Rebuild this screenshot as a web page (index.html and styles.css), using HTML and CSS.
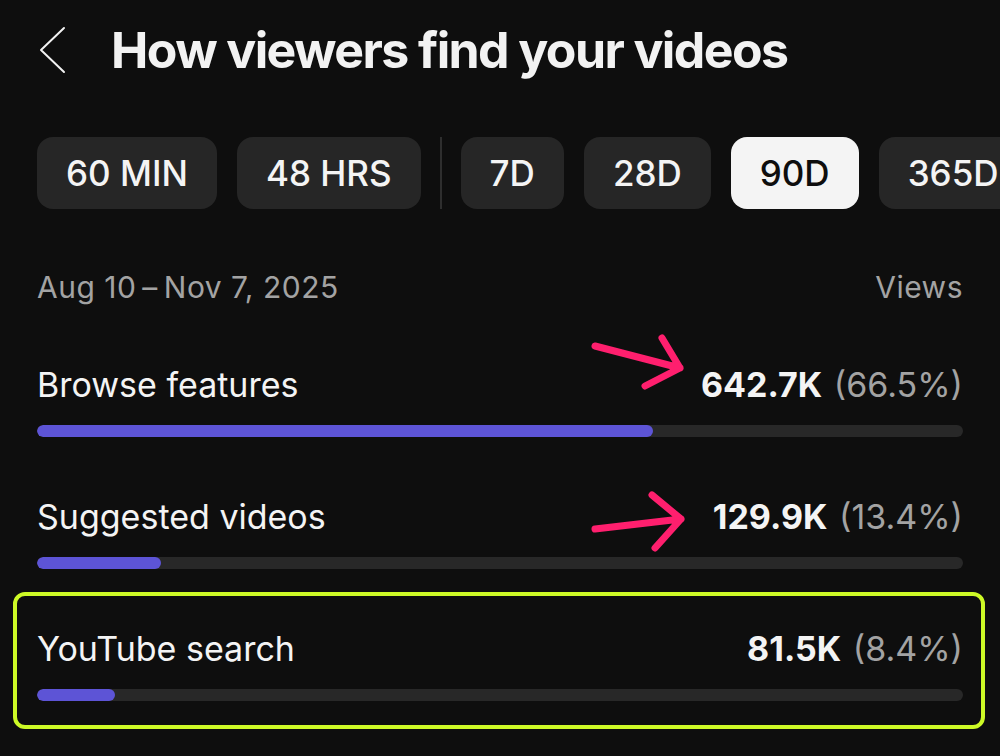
FILE: index.html
```html
<!DOCTYPE html>
<html lang="en">
<head>
  <meta charset="UTF-8" />
  <meta name="viewport" content="width=device-width, initial-scale=1.0" />
  <title>How viewers find your videos</title>
  <link rel="stylesheet" href="styles.css">
</head>
<body>
  <div class="screen">
    <header class="top-bar">
      <button class="back" aria-label="Back">
        <svg width="30" height="48" viewBox="0 0 30 48">
          <polyline points="26,2 3,24 26,46" fill="none" stroke="#f2f2f2" stroke-width="2" stroke-linecap="round" stroke-linejoin="round" />
        </svg>
      </button>
      <h1>How viewers find your videos</h1>
    </header>

    <div class="ranges">
      <span class="chip">60 MIN</span>
      <span class="chip">48 HRS</span>
      <span class="divider"></span>
      <span class="chip">7D</span>
      <span class="chip">28D</span>
      <span class="chip active">90D</span>
      <span class="chip">365D</span>
    </div>

    <div class="summary">
      <span>Aug 10&thinsp;&ndash;&thinsp;Nov 7, 2025</span>
      <span>Views</span>
    </div>

    <ul class="sources">
      <li class="source">
        <div class="source-head">
          <span class="name">Browse features</span>
          <span class="value"><b>642.7K</b> <span class="pct">(66.5%)</span></span>
        </div>
        <div class="track"><div class="fill" style="width: 66.5%;"></div></div>
      </li>
      <li class="source">
        <div class="source-head">
          <span class="name">Suggested videos</span>
          <span class="value"><b>129.9K</b> <span class="pct">(13.4%)</span></span>
        </div>
        <div class="track"><div class="fill" style="width: 13.4%;"></div></div>
      </li>
      <li class="source highlight">
        <div class="source-head">
          <span class="name">YouTube search</span>
          <span class="value"><b>81.5K</b> <span class="pct">(8.4%)</span></span>
        </div>
        <div class="track"><div class="fill" style="width: 8.4%;"></div></div>
      </li>
    </ul>

    <!-- annotation arrows -->
    <svg class="mark mark-one" width="110" height="70" viewBox="0 0 110 70">
      <path d="M8 13 L93 35 M75 5 L93 35 L58 53" fill="none" stroke="#ff1f6e" stroke-width="7" stroke-linecap="round" stroke-linejoin="round" />
    </svg>
    <svg class="mark mark-two" width="110" height="70" viewBox="0 0 110 70">
      <path d="M8 42 L94 32 M65 8 L94 32 L68 61" fill="none" stroke="#ff1f6e" stroke-width="7" stroke-linecap="round" stroke-linejoin="round" />
    </svg>
  </div>
</body>
</html>
```

FILE: styles.css
```css
body {
  margin: 0;
  padding: 0;
  background: #0e0e0e;
  color: #f4f4f4;
  font-family: Inter, 'Noto Sans', sans-serif;
}
.screen {
  position: relative;
  width: 1000px;
  height: 756px;
  overflow: hidden;
  padding: 0 37px;
  box-sizing: border-box;
}
.top-bar {
  display: flex;
  align-items: center;
  padding-top: 20px;
  height: 60px;
}
.back {
  display: flex;
  align-items: center;
  padding: 0;
  margin: 0 0 0 1px;
  width: 73px;
  background: none;
  border: none;
}
h1 {
  margin: 0;
  font-size: 50px;
  line-height: 60px;
  font-weight: 700;
  letter-spacing: -1.6px;
  color: #f2f2f2;
}
.ranges {
  display: flex;
  gap: 20px;
  margin-top: 57px;
  white-space: nowrap;
}
.chip {
  flex: none;
  height: 72px;
  padding: 0 29px;
  display: flex;
  align-items: center;
  border-radius: 16px;
  background: #262626;
  font-size: 35px;
  font-weight: 500;
  color: #f4f4f4;
}
.chip.active {
  background: #f4f4f4;
  color: #0e0e0e;
}
.divider {
  flex: none;
  width: 2px;
  height: 72px;
  margin: 0 -1px;
  background: #2e2e2e;
}
.summary {
  display: flex;
  justify-content: space-between;
  margin-top: 60px;
  font-size: 30px;
  line-height: 36px;
  letter-spacing: 0.5px;
  color: #a3a3a3;
}
.sources {
  list-style: none;
  margin: 60px 0 0;
  padding: 0;
}
.source + .source {
  margin-top: 60px;
}
.source-head {
  display: flex;
  justify-content: space-between;
  font-size: 34px;
  line-height: 40px;
}
.value b {
  font-weight: 700;
  margin-right: 2px;
}
.pct {
  color: #a3a3a3;
}
.track {
  margin-top: 20px;
  height: 12px;
  border-radius: 6px;
  background: #282828;
  overflow: hidden;
}
.fill {
  height: 100%;
  border-radius: 6px;
  background: #5d54d6;
}
.source.highlight {
  margin: 23px -22px 0 -24px;
  padding: 33px 18px 24px 20px;
  border: 4px solid #cdfa26;
  border-radius: 12px;
}
.mark {
  position: absolute;
}
.mark-one {
  left: 587px;
  top: 333px;
}
.mark-two {
  left: 587px;
  top: 487px;
}
```
